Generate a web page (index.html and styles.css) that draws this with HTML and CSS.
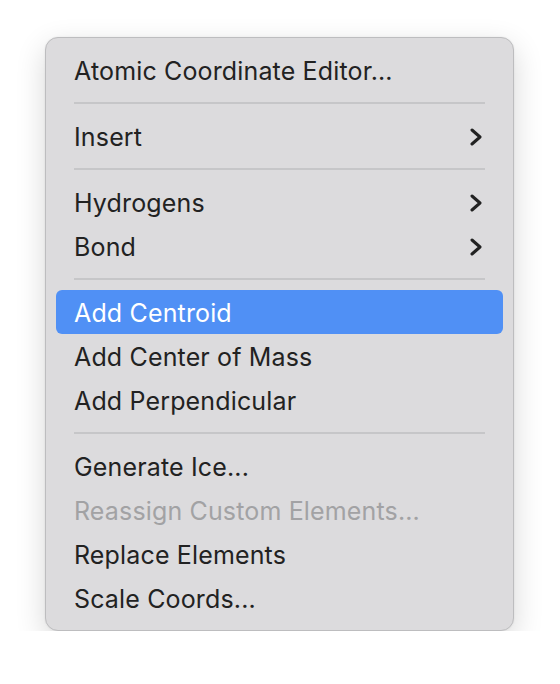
FILE: index.html
```html
<!DOCTYPE html>
<html>
<head>
<meta charset="utf-8">
<link rel="stylesheet" href="styles.css">
</head>
<body>
<div class="menu">
  <div class="item">Atomic Coordinate Editor...</div>
  <div class="sep"></div>
  <div class="item">Insert<svg class="chev" viewBox="0 0 12 18"><path d="M2 2 L10 9 L2 16"/></svg></div>
  <div class="sep"></div>
  <div class="item">Hydrogens<svg class="chev" viewBox="0 0 12 18"><path d="M2 2 L10 9 L2 16"/></svg></div>
  <div class="item">Bond<svg class="chev" viewBox="0 0 12 18"><path d="M2 2 L10 9 L2 16"/></svg></div>
  <div class="sep"></div>
  <div class="item active">Add Centroid</div>
  <div class="item">Add Center of Mass</div>
  <div class="item">Add Perpendicular</div>
  <div class="sep"></div>
  <div class="item">Generate Ice...</div>
  <div class="item disabled">Reassign Custom Elements...</div>
  <div class="item">Replace Elements</div>
  <div class="item">Scale Coords...</div>
</div>
</body>
</html>
```
FILE: styles.css
```css
html, body {
  margin: 0;
  padding: 0;
  background: #ffffff;
}
body {
  padding: 37px 0 0 45px;
  font-family: Inter, "Noto Sans", sans-serif;
}
.menu {
  width: 447px;
  padding: 10px;
  background: #dcdbdd;
  border: 1px solid #bdbdbf;
  border-radius: 13px;
  box-shadow: 0 10px 30px rgba(0, 0, 0, 0.16), 0 0 2px rgba(0, 0, 0, 0.08);
}
.item {
  box-sizing: border-box;
  height: 44px;
  display: flex;
  align-items: center;
  justify-content: space-between;
  padding: 2px 21px 0 18px;
  border-radius: 6px;
  font-size: 25px;
  color: #222222;
  letter-spacing: 0.15px;
}
.item.active {
  background: #5090f5;
  color: #ffffff;
}
.item.disabled {
  color: #a2a2a4;
}
.sep {
  height: 22px;
  display: flex;
  align-items: center;
  padding: 0 18px;
}
.sep::before {
  content: "";
  flex: 1;
  height: 2px;
  background: #c6c6c8;
}
.chev {
  width: 12px;
  height: 18px;
  fill: none;
  stroke: #222222;
  stroke-width: 3;
  stroke-linecap: round;
  stroke-linejoin: round;
}
```
